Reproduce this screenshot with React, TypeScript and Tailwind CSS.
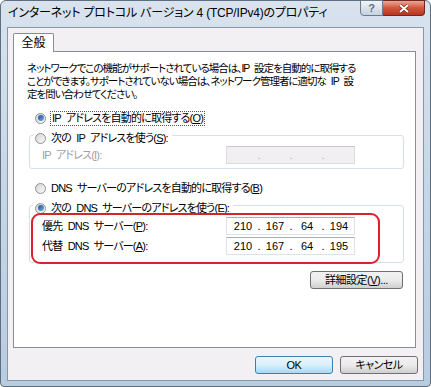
import { Fragment } from "react";

const jp =
  "font-['Liberation_Sans','Noto_Sans_CJK_JP',sans-serif] [font-feature-settings:'palt']";

const Radio = ({ checked }: { checked?: boolean }) => (
  <span className="w-[11px] h-[11px] rounded-full border border-[#8e8f91] bg-linear-to-br from-[#d4d4d4] to-[#fbfbfb] flex items-center justify-center shrink-0">
    {checked && (
      <span className="w-[6px] h-[6px] rounded-full bg-linear-to-br from-[#1b4f90] to-[#74b0e6]" />
    )}
  </span>
);

const IpField = ({ parts, disabled }: { parts: string[]; disabled?: boolean }) => (
  <div
    className={`w-[129px] h-[18px] border flex items-center pl-[3px] text-[11px] tracking-normal [word-spacing:0] ${
      disabled
        ? "bg-[#f1eff1] border-[#dcdcde] border-t-[#c8c8cb] text-[#b0b0b0]"
        : "bg-white border-[#dde2e8] border-t-[#abadb3] text-black"
    }`}
  >
    {parts.map((p, i) => (
      <Fragment key={i}>
        {i > 0 && <span className="w-[6px] text-center">.</span>}
        <span className="w-[26px] text-center">{p}</span>
      </Fragment>
    ))}
  </div>
);

const Btn = ({ children, def, w }: { children: React.ReactNode; def?: boolean; w: string }) => (
  <button
    className={`${w} h-[18px] rounded-[3px] border text-[11px] tracking-[-0.5px] leading-none flex items-center justify-center ${
      def
        ? "border-[#3c7fb1] bg-linear-to-b from-[#eaf6fd] via-[#d9f0fc] to-[#a7d9f5]"
        : "border-[#707070] bg-linear-to-b from-[#f2f2f2] via-[#ebebeb] to-[#cfcfcf]"
    }`}
  >
    {children}
  </button>
);

export default function App() {
  return (
    <div
      className={`${jp} w-[431px] h-[387px] flex flex-col border border-[#5d6e80] rounded-t-[6px] rounded-b-[4px] bg-linear-to-b from-[#d8e3ee] via-[#c6d6e6] to-[#b8cce0] text-black`}
    >
      {/* title bar */}
      <div className="h-[26px] flex items-start shrink-0">
        <span className="pl-[7px] pt-[5px] text-[12px] leading-[14px] tracking-[-0.2px] text-black whitespace-nowrap">
          インターネット プロトコル バージョン 4 (TCP/IPv4)のプロパティ
        </span>
        <div className="ml-auto mr-[5px] -mt-px flex">
          <div className="w-[23px] h-[16px] border border-[#6b7b8c] rounded-bl-[4px] bg-linear-to-b from-[#f0f4f9] to-[#c5d2e0] flex items-center justify-center text-[11px] font-bold text-[#5c6f86] leading-none">
            ?
          </div>
          <div className="w-[42px] h-[16px] border border-l-0 border-[#70281e] rounded-br-[4px] bg-linear-to-b from-[#eba596] via-[#d2553c] to-[#b8351f] flex items-center justify-center">
            <svg width="12" height="9" viewBox="0 0 12 9">
              <path d="M2 1 L10 8 M10 1 L2 8" stroke="#5a1a10" strokeWidth="3" />
              <path d="M2 1 L10 8 M10 1 L2 8" stroke="#ffffff" strokeWidth="2" />
            </svg>
          </div>
        </div>
      </div>

      {/* client area */}
      <div className="flex-1 mx-[6px] mb-[5px] border border-[#8797a9] bg-[#f3f0f3] flex flex-col">
        <div className="pt-[4px] pl-[5px] h-[23px] flex items-end">
          <div className="w-[41px] h-[19px] border border-b-0 border-[#898c95] bg-white relative z-10 -mb-px text-[12px] flex items-center justify-center rounded-t-[2px]">
            全般
          </div>
        </div>

        <div className="ml-[5px] w-[403px] h-[297px] border border-[#898c95] bg-white flex flex-col text-[11px] tracking-[-0.8px] [word-spacing:3px] whitespace-nowrap">
          <p className="pt-[10px] pl-[13px] leading-[13px] text-[10.5px] tracking-[-1px]">
            ネットワークでこの機能がサポートされている場合は、IP 設定を自動的に取得する
            <br />
            ことができます。サポートされていない場合は、ネットワーク管理者に適切な IP 設
            <br />
            定を問い合わせてください。
          </p>

          <div className="mt-[9px] ml-[21px] h-[16px] flex items-center gap-[5px]">
            <Radio checked />
            <span className="border border-dotted border-[#555] leading-[13px] px-px -ml-px">
              IP アドレスを自動的に取得する(<u>O</u>)
            </span>
          </div>

          <div className="mt-[9px] ml-[15px] w-[375px] border border-[#d5dfe5] rounded-[3px] pb-[4px] flex flex-col">
            <div className="-mt-[6px] ml-[3px] pl-[2px] pr-[4px] h-[16px] self-start bg-white flex items-center gap-[5px]">
              <Radio />
              <span>
                次の IP アドレスを使う(<u>S</u>):
              </span>
            </div>
            <div className="h-[18px] pl-[12px] flex items-center">
              <span className="w-[184px] text-[#a0a0a0]">
                IP アドレス(<u>I</u>):
              </span>
              <IpField parts={["", "", "", ""]} disabled />
            </div>
          </div>

          <div className="mt-[11px] ml-[21px] h-[16px] flex items-center gap-[5px]">
            <Radio />
            <span>
              DNS サーバーのアドレスを自動的に取得する(<u>B</u>)
            </span>
          </div>

          <div className="relative mt-[9px] ml-[15px] w-[375px] border border-[#d5dfe5] rounded-[3px] pb-[6px] flex flex-col">
            <div className="-mt-[6px] ml-[3px] pl-[2px] pr-[4px] h-[16px] self-start bg-white flex items-center gap-[5px]">
              <Radio checked />
              <span>
                次の DNS サーバーのアドレスを使う(<u>E</u>):
              </span>
            </div>
            <div className="h-[20px] pl-[12px] flex items-center">
              <span className="w-[184px]">
                優先 DNS サーバー(<u>P</u>):
              </span>
              <IpField parts={["210", "167", "64", "194"]} />
            </div>
            <div className="h-[20px] pl-[12px] flex items-center">
              <span className="w-[184px]">
                代替 DNS サーバー(<u>A</u>):
              </span>
              <IpField parts={["210", "167", "64", "195"]} />
            </div>
            {/* highlight annotation */}
            <div className="absolute left-[1px] top-[7px] w-[349px] h-[51px] border-2 border-[#d9212b] rounded-[9px] pointer-events-none" />
          </div>

          <div className="mt-[8px] mr-[12px] self-end">
            <Btn w="w-[93px]">
              詳細設定(<u>V</u>)...
            </Btn>
          </div>
        </div>

        <div className="mt-[8px] pr-[5px] flex justify-end gap-[7px]">
          <Btn w="w-[78px]" def>
            OK
          </Btn>
          <Btn w="w-[78px]">キャンセル</Btn>
        </div>
      </div>
    </div>
  );
}
